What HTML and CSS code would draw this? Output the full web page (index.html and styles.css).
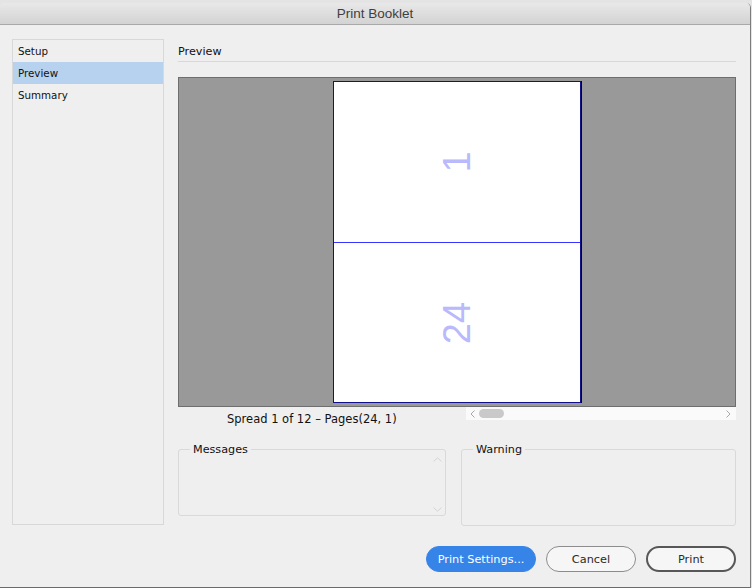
FILE: index.html
```html
<!DOCTYPE html>
<html lang="en">
<head>
<meta charset="utf-8">
<title>Print Booklet</title>
<link rel="stylesheet" href="styles.css">
</head>
<body>
<div class="desk">
  <div class="window">
    <div class="titlebar">Print Booklet</div>
    <div class="content">
      <div class="panes">
        <ul class="nav">
          <li class="nav-item">Setup</li>
          <li class="nav-item active">Preview</li>
          <li class="nav-item">Summary</li>
        </ul>
        <section class="main">
          <h2 class="section-title">Preview</h2>
          <div class="preview">
            <div class="page">
              <div class="half half-top"><span class="num">1</span></div>
              <div class="half"><span class="num">24</span></div>
            </div>
          </div>
          <div class="below">
            <div class="spread">Spread 1 of 12 – Pages(24, 1)</div>
            <div class="hscroll">
              <svg class="chev" width="5" height="8" viewBox="0 0 5 8"><path d="M4.5 0.5 L1 4 L4.5 7.5" fill="none" stroke="#a8a8a8" stroke-width="1"/></svg>
              <div class="thumb"></div>
              <svg class="chev chev-right" width="5" height="8" viewBox="0 0 5 8"><path d="M0.5 0.5 L4 4 L0.5 7.5" fill="none" stroke="#a8a8a8" stroke-width="1"/></svg>
            </div>
          </div>
          <div class="groups">
            <fieldset class="group group-messages">
              <legend>Messages</legend>
              <div class="group-body msg-body">
                <svg class="vchev vchev-up" width="9" height="5" viewBox="0 0 9 5"><path d="M0.5 4.5 L4.5 0.8 L8.5 4.5" fill="none" stroke="#d4d4d4" stroke-width="1"/></svg>
                <svg class="vchev vchev-down" width="9" height="5" viewBox="0 0 9 5"><path d="M0.5 0.5 L4.5 4.2 L8.5 0.5" fill="none" stroke="#d4d4d4" stroke-width="1"/></svg>
              </div>
            </fieldset>
            <fieldset class="group group-warning">
              <legend>Warning</legend>
              <div class="group-body warn-body"></div>
            </fieldset>
          </div>
        </section>
      </div>
      <div class="footer">
        <button class="btn btn-primary">Print Settings...</button>
        <button class="btn">Cancel</button>
        <button class="btn btn-default">Print</button>
      </div>
    </div>
  </div>
</div>
</body>
</html>
```
FILE: styles.css
```css
html, body {
  margin: 0;
  padding: 0;
  width: 752px;
  height: 588px;
  overflow: hidden;
  background: #e4e4e4;
}

.desk {
  padding-top: 3px;
  font-family: "DejaVu Sans", sans-serif;
  color: #111;
}

.window {
  width: 750px;
  height: 584px;
  background: #efefef;
  border-right: 1px solid #7c7c7c;
  border-bottom: 1px solid #6a6a6a;
  border-radius: 5px 5px 0 0;
  overflow: hidden;
}

.titlebar {
  height: 21px;
  line-height: 21px;
  border-bottom: 1px solid #a9a9a9;
  background: linear-gradient(#e8e8e8, #d3d3d3);
  text-align: center;
  font-family: "Liberation Sans", Arial, sans-serif;
  font-size: 13.5px;
  color: #3f3f3f;
}

.content {
  padding: 14px 14px 0 12px;
}

.panes {
  display: flex;
  gap: 14px;
  height: 486px;
}

.nav {
  list-style: none;
  margin: 0;
  padding: 0;
  width: 152px;
  box-sizing: border-box;
  border: 1px solid #d8d8d8;
}

.nav-item {
  height: 22px;
  line-height: 22px;
  padding-left: 5px;
  font-size: 10.3px;
  color: #111;
}

.nav-item.active {
  background: #b7d2ee;
}

.main {
  width: 558px;
}

.section-title {
  margin: 0;
  padding-top: 3px;
  height: 19px;
  line-height: 19px;
  border-bottom: 1px solid #d8d8d8;
  font-size: 11.2px;
  font-weight: normal;
  color: #111;
}

.preview {
  margin-top: 15px;
  height: 330px;
  box-sizing: border-box;
  border: 1px solid #6e6e6e;
  background: #999999;
  display: flex;
  align-items: center;
  justify-content: center;
}

.page {
  width: 248px;
  height: 322px;
  box-sizing: border-box;
  border: 1px solid #10108c;
  box-shadow: 1px 0 0 #000;
  background: #fff;
  display: flex;
  flex-direction: column;
}

.half {
  flex: 1;
  display: flex;
  align-items: center;
  justify-content: center;
}

.half-top {
  flex: none;
  height: 160px;
  border-bottom: 1px solid #3535ff;
}

.num {
  display: inline-block;
  transform: rotate(-90deg);
  font-family: "Liberation Sans", Arial, sans-serif;
  font-size: 38px;
  line-height: 1;
  color: #b9b9fc;
}

.below {
  height: 34px;
  display: flex;
}

.spread {
  width: 288px;
  box-sizing: border-box;
  padding: 5px 0 0 49px;
  line-height: 14px;
  font-size: 11.5px;
  color: #111;
}

.hscroll {
  width: 270px;
  height: 13px;
  background: #fafafa;
  display: flex;
  align-items: center;
  padding: 0 5px 0 4px;
  box-sizing: border-box;
}

.thumb {
  width: 25px;
  height: 9px;
  margin-left: 4px;
  border-radius: 5px;
  background: #c9c9c9;
}

.chev-right {
  margin-left: auto;
}

.groups {
  display: flex;
  gap: 15px;
  align-items: flex-start;
}

.group {
  margin: 0;
  padding: 0;
  min-width: 0;
  border: 1px solid #d9d9d9;
  border-radius: 3px;
}

.group legend {
  margin-left: 11px;
  padding: 2px 3px 0;
  font-size: 11.2px;
  line-height: 14px;
  color: #111;
}

.group-messages {
  width: 268px;
  box-sizing: border-box;
}

.group-warning {
  width: 275px;
  box-sizing: border-box;
}

.group-body {
  position: relative;
}

.msg-body {
  height: 58px;
}

.warn-body {
  height: 68px;
}

.vchev {
  position: absolute;
  right: 3px;
}

.vchev-up {
  top: 0;
}

.vchev-down {
  bottom: 3px;
}

.footer {
  margin-top: 21px;
  display: flex;
  justify-content: flex-end;
  gap: 10px;
}

.btn {
  height: 26px;
  width: 90px;
  box-sizing: border-box;
  border-radius: 13px;
  border: 1px solid #8c8c8c;
  background: #f6f6f6;
  font-family: "DejaVu Sans", sans-serif;
  font-size: 11.3px;
  color: #2a2a2a;
  padding: 1px 0 0;
}

.btn-primary {
  width: 110px;
  border-color: #3784e8;
  background: #3784e8;
  color: #fff;
}

.btn-default {
  border: 2px solid #575757;
}
```
